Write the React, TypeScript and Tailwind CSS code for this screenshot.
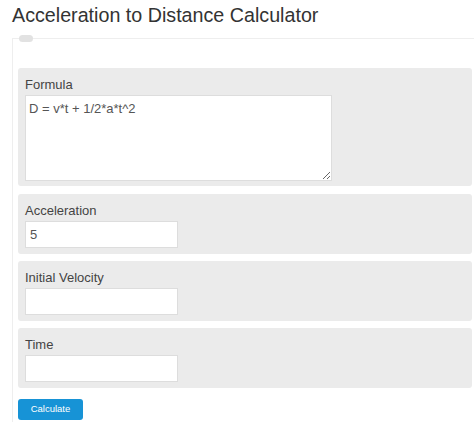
import { useState } from 'react';

interface FieldProps {
  label: string;
  value: string;
  onChange: (v: string) => void;
}

function Field({ label, value, onChange }: FieldProps) {
  return (
    <div className="mb-[7px] mr-[2px] rounded-[3px] bg-[#ebebeb] px-[7px] pt-[7px] pb-[6px]">
      <label className="block text-[13px] leading-[20px] text-[#444]">{label}</label>
      <input
        type="text"
        value={value}
        onChange={(e) => onChange(e.target.value)}
        className="block h-[27px] w-[153px] border border-[#ddd] bg-white px-[4px] text-[13px] text-[#555] outline-none"
      />
    </div>
  );
}

export default function App() {
  const [formula, setFormula] = useState('D = v*t + 1/2*a*t^2');
  const [acceleration, setAcceleration] = useState('5');
  const [velocity, setVelocity] = useState('');
  const [time, setTime] = useState('');

  return (
    <div className="h-[422px] w-[474px] overflow-hidden bg-white font-['Liberation_Sans',Arial,sans-serif]">
      <h1 className="pl-3 pt-[3px] text-[19.7px] leading-[24px] text-[#333]">
        Acceleration to Distance Calculator
      </h1>

      <div className="relative ml-3 mt-[11px] border-l border-t border-[#eee] pl-[5px] pt-[29px]">
        {/* little legend pill on the box edge */}
        <div className="absolute -top-[4px] left-[6px] h-[7px] w-[14px] rounded-full bg-[#e2e2e2]" />

        <div className="mb-[8px] mr-[2px] rounded-[3px] bg-[#ebebeb] px-[7px] pt-[7px] pb-[5px]">
          <label className="block text-[13px] leading-[20px] text-[#444]">Formula</label>
          <textarea
            value={formula}
            onChange={(e) => setFormula(e.target.value)}
            className="block h-[86px] w-[307px] border border-[#ddd] bg-white px-[3px] py-[4px] text-[13px] leading-[17px] text-[#555] outline-none"
          />
        </div>

        <Field label="Acceleration" value={acceleration} onChange={setAcceleration} />
        <Field label="Initial Velocity" value={velocity} onChange={setVelocity} />
        <Field label="Time" value={time} onChange={setTime} />

        <button className="mb-[6px] h-[21px] w-[65px] rounded-[3px] bg-[#1793d6] text-[9.5px] text-white">
          Calculate
        </button>
      </div>
    </div>
  );
}
